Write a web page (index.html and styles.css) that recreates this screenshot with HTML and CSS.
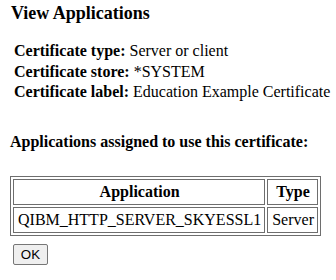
FILE: index.html
```html
<!DOCTYPE html>
<html>
<head>
<meta charset="utf-8">
<link rel="stylesheet" href="styles.css">
</head>
<body>
<div class="page">
  <h1 class="title">View Applications</h1>
  <div class="info">
    <div class="row"><b>Certificate type:</b> Server or client</div>
    <div class="row"><b>Certificate store:</b> *SYSTEM</div>
    <div class="row"><b>Certificate label:</b> Education Example Certificate</div>
  </div>
  <h2 class="subtitle">Applications assigned to use this certificate:</h2>
  <table class="apps">
    <tr><th class="app">Application</th><th>Type</th></tr>
    <tr><td>QIBM_HTTP_SERVER_SKYESSL1</td><td>Server</td></tr>
  </table>
  <button class="ok" type="button">OK</button>
</div>
</body>
</html>
```
FILE: styles.css
```css
html, body { margin: 0; padding: 0; background: #fff; }
body { font-family: "Liberation Serif", "Times New Roman", serif; font-size: 16px; color: #000; }
.page { padding: 3px 0 0 11px; }
.title { font-size: 18px; font-weight: bold; margin: 0; line-height: 20px; }
.info { margin: 18px 0 0 3px; }
.row { line-height: 20.5px; }
.subtitle { font-size: 16px; font-weight: bold; margin: 29px 0 0 -1px; line-height: 20px; }
.apps { margin: 24px 0 0 -1px; border: 1px solid #6e6e6e; border-spacing: 2px; border-collapse: separate; }
.apps th, .apps td { border: 1px solid #6e6e6e; padding: 2px 3px 2px 4px; font-size: 16px; line-height: 20px; }
.ok { display: block; margin: 8px 0 0 2px; width: 35px; height: 21px; padding: 0; font-family: "Liberation Sans", Arial, sans-serif; font-size: 13.33px; background: #efefef; border: 1px solid #767676; border-radius: 2px; color: #000; }
```
